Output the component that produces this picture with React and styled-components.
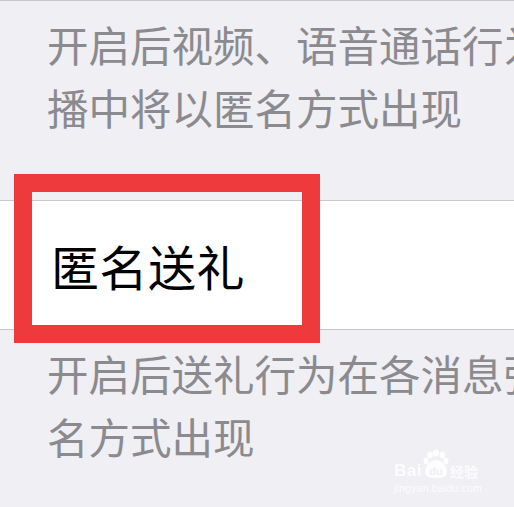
import React from "react";
import styled, { createGlobalStyle } from "styled-components";

const Global = createGlobalStyle`
  html, body { margin: 0; padding: 0; }
  body {
    background: #efeff4;
    font-family: "Noto Sans CJK SC", "Noto Sans", sans-serif;
  }
`;

const Page = styled.div`
  position: relative;
  width: 514px;
  height: 507px;
  overflow: hidden;
  background: #efeff4;
  border-top: 1px solid #c8c7cc;
  box-sizing: border-box;
`;

const Desc = styled.div`
  padding: ${(p) => p.$top}px 0 0 47px;
  color: #8a8a8f;
  font-size: 41.5px;
  line-height: 63px;
  white-space: nowrap;
`;

const Line = styled.div`
  height: 63px;
`;

const Row = styled.div`
  position: relative;
  margin-top: ${(p) => p.$gap}px;
  height: 128px;
  background: #fff;
  border-top: 1px solid #c8c7cc;
  border-bottom: 1px solid #c8c7cc;
  display: flex;
  align-items: center;
  padding-left: 51px;
`;

const Title = styled.span`
  color: #000;
  font-size: 48px;
  line-height: 1;
  letter-spacing: 0.5px;
`;

const Highlight = styled.div`
  position: absolute;
  left: 14px;
  top: -27px;
  width: 306px;
  height: 169px;
  box-sizing: border-box;
  border: 18px solid #ee3a3c;
  pointer-events: none;
`;

const Watermark = styled.div`
  position: absolute;
  left: 394px;
  top: 448px;
  color: rgba(255, 255, 255, 0.85);
  font-family: "Liberation Sans", Arial, sans-serif;
  display: flex;
  flex-direction: column;
  align-items: flex-start;
`;

const WmTop = styled.div`
  display: flex;
  align-items: flex-end;
  gap: 1px;
`;

const WmBai = styled.span`
  font-size: 17px;
  font-weight: bold;
  line-height: 17px;
  letter-spacing: 0.5px;
`;

const WmCn = styled.span`
  font-family: "Noto Sans CJK SC", sans-serif;
  font-size: 14px;
  line-height: 16px;
  font-weight: bold;
`;

const WmUrl = styled.span`
  font-size: 10.5px;
  line-height: 12px;
  margin-top: 3px;
  letter-spacing: 0.2px;
`;

function Paw() {
  return (
    <svg width="26" height="30" viewBox="0 0 26 30">
      <g fill="rgba(255,255,255,0.85)">
        <ellipse cx="7" cy="6" rx="3" ry="3.6" />
        <ellipse cx="13" cy="4" rx="3" ry="3.6" />
        <ellipse cx="19.5" cy="6" rx="3" ry="3.6" />
        <ellipse cx="3" cy="12" rx="2.6" ry="3.2" />
        <ellipse cx="23" cy="12" rx="2.6" ry="3.2" />
        <path d="M13 11 C 6 11 2 18 2 23 C 2 28 7 29 13 29 C 19 29 24 28 24 23 C 24 18 20 11 13 11 Z" />
      </g>
      <text
        x="13"
        y="26"
        textAnchor="middle"
        fontFamily="Liberation Sans, Arial, sans-serif"
        fontWeight="bold"
        fontSize="11"
        fill="#efeff4"
      >
        du
      </text>
    </svg>
  );
}

export default function App() {
  return (
    <>
      <Global />
      <Page>
        <Desc $top={12}>
          <Line>开启后视频、语音通话行为在直</Line>
          <Line>播中将以匿名方式出现</Line>
        </Desc>
        <Row $gap={61}>
          <Title>匿名送礼</Title>
          <Highlight />
        </Row>
        <Desc $top={12}>
          <Line>开启后送礼行为在各消息弹窗</Line>
          <Line>名方式出现</Line>
        </Desc>
        <Watermark>
          <WmTop>
            <WmBai>Bai</WmBai>
            <Paw />
            <WmCn>经验</WmCn>
          </WmTop>
          <WmUrl>jingyan.baidu.com</WmUrl>
        </Watermark>
      </Page>
    </>
  );
}
